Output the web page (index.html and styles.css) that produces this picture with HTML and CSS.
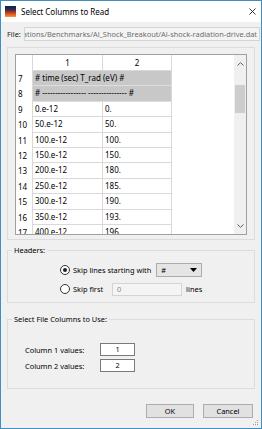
FILE: index.html
```html
<!DOCTYPE html>
<html lang="en">
<head>
  <meta charset="UTF-8">
  <title>Select Columns to Read</title>
  <link rel="stylesheet" href="styles.css">
</head>
<body>
  <div class="window">
    <div class="titlebar">
      <svg class="app-icon" width="11" height="11" viewBox="0 0 11 11">
        <defs>
          <linearGradient id="heat" x1="0" y1="0" x2="0" y2="1">
            <stop offset="0" stop-color="#14203e"/>
            <stop offset="0.35" stop-color="#2a2f5c"/>
            <stop offset="0.55" stop-color="#b8321a"/>
            <stop offset="0.8" stop-color="#e5651f"/>
            <stop offset="1" stop-color="#f2a13a"/>
          </linearGradient>
        </defs>
        <rect width="11" height="11" fill="url(#heat)"/>
      </svg>
      <span class="title">Select Columns to Read</span>
      <svg class="close" width="7" height="7" viewBox="0 0 7 7">
        <path d="M0.5 0.5 L6.5 6.5 M6.5 0.5 L0.5 6.5" stroke="#222" stroke-width="0.9" fill="none"/>
      </svg>
    </div>

    <div class="content">
      <div class="file-row">
        <span class="file-label">File:</span>
        <div class="file-path"><span>ations/Benchmarks/Al_Shock_Breakout/Al-shock-radiation-drive.dat</span></div>
      </div>

      <div class="frame">
        <div class="table-view">
          <div class="grid">
            <div class="row head">
              <div class="num"></div>
              <div class="cell">1</div>
              <div class="cell last">2</div>
            </div>
            <div class="row skipped">
              <div class="num">7</div>
              <div class="cell span"># time (sec) T_rad (eV) #</div>
            </div>
            <div class="row skipped">
              <div class="num">8</div>
              <div class="cell span"># ----------------- --------------- #</div>
            </div>
            <div class="row"><div class="num">9</div><div class="cell">0.e-12</div><div class="cell last">0.</div></div>
            <div class="row"><div class="num">10</div><div class="cell">50.e-12</div><div class="cell last">50.</div></div>
            <div class="row"><div class="num">11</div><div class="cell">100.e-12</div><div class="cell last">100.</div></div>
            <div class="row"><div class="num">12</div><div class="cell">150.e-12</div><div class="cell last">150.</div></div>
            <div class="row"><div class="num">13</div><div class="cell">200.e-12</div><div class="cell last">180.</div></div>
            <div class="row"><div class="num">14</div><div class="cell">250.e-12</div><div class="cell last">185.</div></div>
            <div class="row"><div class="num">15</div><div class="cell">300.e-12</div><div class="cell last">190.</div></div>
            <div class="row"><div class="num">16</div><div class="cell">350.e-12</div><div class="cell last">193.</div></div>
            <div class="row"><div class="num">17</div><div class="cell">400.e-12</div><div class="cell last">196.</div></div>
          </div>
          <div class="scrollbar">
            <div class="sb-btn">
              <svg width="7" height="4" viewBox="0 0 7 4"><path d="M0.5 3.5 L3.5 0.7 L6.5 3.5" stroke="#606060" stroke-width="1" fill="none"/></svg>
            </div>
            <div class="sb-track"><div class="sb-thumb"></div></div>
            <div class="sb-btn">
              <svg width="7" height="4" viewBox="0 0 7 4"><path d="M0.5 0.5 L3.5 3.3 L6.5 0.5" stroke="#606060" stroke-width="1" fill="none"/></svg>
            </div>
          </div>
        </div>
      </div>

      <fieldset class="group headers">
        <legend>Headers:</legend>
        <div class="option-row">
          <span class="radio checked"></span>
          <span class="option-text">Skip lines starting with</span>
          <div class="combo">
            <span>#</span>
            <svg width="7" height="4" viewBox="0 0 7 4"><path d="M0 0 H7 L3.5 4 Z" fill="#000"/></svg>
          </div>
        </div>
        <div class="option-row">
          <span class="radio"></span>
          <span class="option-text">Skip first</span>
          <div class="spin disabled">0</div>
          <span class="option-text">lines</span>
        </div>
      </fieldset>

      <fieldset class="group columns">
        <legend>Select File Columns to Use:</legend>
        <div class="col-row">
          <span class="col-label">Column 1 values:</span>
          <div class="col-input">1</div>
        </div>
        <div class="col-row">
          <span class="col-label">Column 2 values:</span>
          <div class="col-input">2</div>
        </div>
      </fieldset>

      <div class="buttons">
        <button class="btn ok">OK</button>
        <button class="btn cancel">Cancel</button>
      </div>
    </div>

    <svg class="grip" width="6" height="6" viewBox="0 0 6 6">
      <rect x="4" y="0" width="1" height="1" fill="#a0a0a0"/>
      <rect x="2" y="2" width="1" height="1" fill="#a0a0a0"/>
      <rect x="4" y="2" width="1" height="1" fill="#a0a0a0"/>
      <rect x="0" y="4" width="1" height="1" fill="#a0a0a0"/>
      <rect x="2" y="4" width="1" height="1" fill="#a0a0a0"/>
      <rect x="4" y="4" width="1" height="1" fill="#a0a0a0"/>
    </svg>
  </div>
</body>
</html>
```

FILE: styles.css
```css
* {
  box-sizing: border-box;
}

body {
  margin: 0;
  font-family: "Noto Sans", "Open Sans", sans-serif;
  font-size: 7.4px;
  color: #000;
  background: #fff;
}

.window {
  position: relative;
  width: 262px;
  height: 429px;
  border: 1px solid #3f8fc0;
  background: #f0f0f0;
  display: flex;
  flex-direction: column;
}

.titlebar {
  height: 21px;
  background: #fff;
  display: flex;
  align-items: center;
  padding: 0 5px 0 4px;
  font-size: 8px;
}

.title {
  flex: 1;
  margin-left: 5px;
}

.content {
  flex: 1;
  display: flex;
  flex-direction: column;
  padding: 5px 6px 0 6px;
}

/* file path */
.file-row {
  display: flex;
  align-items: center;
  height: 14px;
}

.file-label {
  width: 17px;
  color: #222;
}

.file-path {
  flex: 1;
  height: 14px;
  margin-right: -5px;
  border: 1px solid #d4d4d4;
  background: #f4f4f4;
  color: #6d6d6d;
  display: flex;
  justify-content: flex-end;
  align-items: center;
  overflow: hidden;
  white-space: nowrap;
  padding-right: 2px;
}

/* table frame */
.frame {
  margin-top: 6px;
  border: 1px solid #dcdcdc;
  padding: 6px 7px 4px 7px;
}

.table-view {
  width: 232px;
  height: 181px;
  border: 1px solid #a0a0a0;
  background: #fff;
  display: flex;
  font-size: 8px;
}

.grid {
  flex: 1;
  overflow: hidden;
}

.row {
  display: grid;
  grid-template-columns: 16px 70px 70px;
  height: 15.4px;
}

.row.head {
  height: 16px;
}

.num {
  padding-left: 2px;
  line-height: 15px;
  white-space: nowrap;
}

.cell {
  border-left: 1px solid #d9d9d9;
  border-bottom: 1px solid #d9d9d9;
  padding-left: 2px;
  line-height: 14px;
  white-space: nowrap;
  overflow: hidden;
}

.cell.last {
  border-right: 1px solid #d9d9d9;
}

.head .cell {
  text-align: center;
  padding-left: 0;
  line-height: 15px;
}

.cell.span {
  grid-column: span 2;
  border-right: 1px solid #d9d9d9;
}

.skipped .cell {
  background: #c8c8c8;
  border-bottom-color: #dedede;
}

.scrollbar {
  width: 12px;
  background: #f0f0f0;
  display: flex;
  flex-direction: column;
}

.sb-btn {
  height: 17px;
  display: flex;
  align-items: center;
  justify-content: center;
}

.sb-track {
  flex: 1;
  padding-top: 13px;
}

.sb-thumb {
  height: 28px;
  margin: 0 1px;
  background: #cdcdcd;
}

/* group boxes */
.group {
  margin: 4px 0 0 0;
  border: 1px solid #dcdcdc;
  padding: 7px 4px 6px 4px;
  min-width: 0;
}

.group legend {
  padding: 0 2px;
  line-height: 12px;
}

.option-row {
  display: flex;
  align-items: center;
  height: 14px;
  padding-left: 48px;
}

.option-row + .option-row {
  margin-top: 5px;
}

.radio {
  width: 10px;
  height: 10px;
  border: 1px solid #333;
  border-radius: 50%;
  background: #fff;
  display: flex;
  align-items: center;
  justify-content: center;
}

.radio.checked::after {
  content: "";
  width: 4px;
  height: 4px;
  border-radius: 50%;
  background: #222;
}

.option-text {
  margin-left: 3px;
}

.combo {
  margin-left: 5px;
  width: 46px;
  height: 14px;
  border: 1px solid #acacac;
  background: #e5e5e5;
  display: flex;
  align-items: center;
  justify-content: space-between;
  padding: 0 4px 0 4px;
}

.spin {
  margin-left: 9px;
  width: 70px;
  height: 13px;
  border: 1px solid #d4d4d4;
  background: #f4f4f4;
  color: #8a8a8a;
  padding-left: 4px;
  line-height: 11px;
}

.spin + .option-text {
  margin-left: 4px;
}

.columns {
  margin-top: 10px;
  padding: 18px 4px 16px 4px;
}

.col-row {
  display: flex;
  align-items: center;
  height: 13px;
  padding-left: 13px;
}

.col-row + .col-row {
  margin-top: 3px;
}

.col-label {
  width: 75px;
}

.col-input {
  width: 35px;
  height: 13px;
  border: 1px solid #7a7a7a;
  background: #fff;
  text-align: center;
  line-height: 11px;
}

/* buttons */
.buttons {
  display: flex;
  justify-content: flex-end;
  gap: 9px;
  margin-top: 15px;
  padding-right: 2px;
}

.btn {
  height: 14px;
  border: 1px solid #adadad;
  background: #e1e1e1;
  font-family: inherit;
  font-size: 7.4px;
  color: #000;
  padding: 0;
}

.btn.ok {
  width: 48px;
}

.btn.cancel {
  width: 50px;
}

.grip {
  position: absolute;
  right: 2px;
  bottom: 2px;
}
```
